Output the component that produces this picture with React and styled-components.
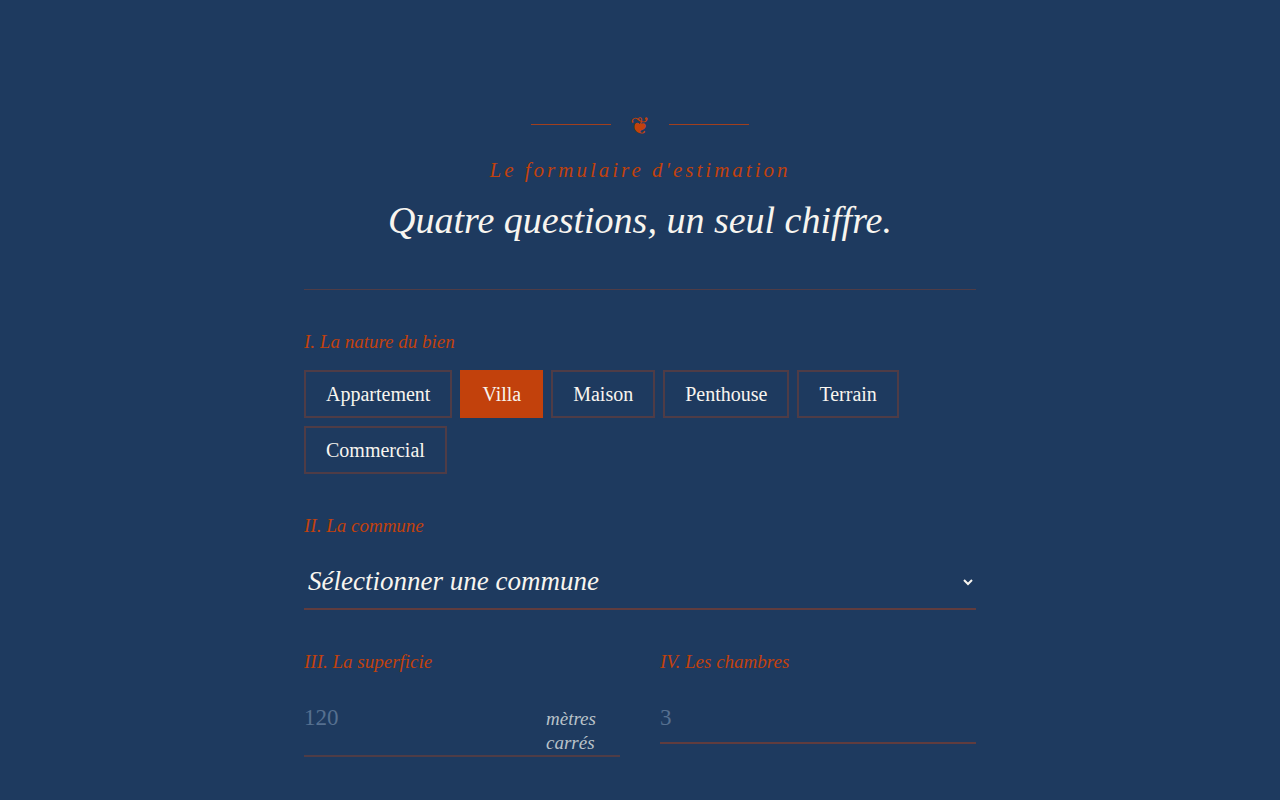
import React, { useState } from "react";
import styled, { createGlobalStyle } from "styled-components";

const natures = [
  "Appartement",
  "Villa",
  "Maison",
  "Penthouse",
  "Terrain",
  "Commercial",
];

function App() {
  const [nature, setNature] = useState("Villa");
  const [commune, setCommune] = useState("");

  return (
    <Page>
      <GlobalStyle />
      <Container>
        <Header>
          <Ornament aria-hidden="true">
            <Rule />
            <Fleuron>❦</Fleuron>
            <Rule />
          </Ornament>
          <Eyebrow>Le formulaire d'estimation</Eyebrow>
          <Title>Quatre questions, un seul chiffre.</Title>
        </Header>
        <Form>
          <Group>
            <Legend>I. La nature du bien</Legend>
            <Choices>
              {natures.map((name) => (
                <Choice
                  key={name}
                  type="button"
                  $active={name === nature}
                  aria-pressed={name === nature}
                  onClick={() => setNature(name)}
                >
                  {name}
                </Choice>
              ))}
            </Choices>
          </Group>
          <Field>
            <Label htmlFor="commune">II. La commune</Label>
            <Select
              id="commune"
              value={commune}
              onChange={(e) => setCommune(e.target.value)}
            >
              <option value="">Sélectionner une commune</option>
            </Select>
          </Field>
          <Columns>
            <Field>
              <Label htmlFor="superficie">III. La superficie</Label>
              <InputLine $faint>
                <Input id="superficie" inputMode="numeric" placeholder="120" />
                <Unit>mètres carrés</Unit>
              </InputLine>
            </Field>
            <Field>
              <Label htmlFor="chambres">IV. Les chambres</Label>
              <InputLine>
                <Input id="chambres" inputMode="numeric" placeholder="3" />
              </InputLine>
            </Field>
          </Columns>
        </Form>
      </Container>
    </Page>
  );
}

export default App;

const GlobalStyle = createGlobalStyle`
  * {
    box-sizing: border-box;
  }
  body {
    margin: 0;
    background: #1e3a5f;
    color: #f8f5ef;
    font-family: "Liberation Serif", serif;
  }
`;

const Page = styled.main`
  min-height: 100vh;
  padding: 112px 24px 0;
  overflow: hidden;
`;
const Container = styled.div`
  max-width: 672px;
  margin: 0 auto;
`;
const Header = styled.header`
  padding-bottom: 45px;
  border-bottom: 1px solid rgba(194, 65, 12, 0.3);
  text-align: center;
`;
const Ornament = styled.div`
  display: flex;
  justify-content: center;
  align-items: center;
  gap: 19px;
  height: 24px;
  margin-bottom: 20px;
`;
const Rule = styled.span`
  width: 80px;
  height: 1px;
  background: #c2410c;
  opacity: 0.8;
`;
const Fleuron = styled.span`
  padding-top: 4px;
  color: #c2410c;
  font-size: 24px;
  line-height: 24px;
`;
const Eyebrow = styled.p`
  margin: 0 0 12px;
  color: #c2410c;
  font-size: 21px;
  font-style: italic;
  line-height: 28px;
  letter-spacing: 3px;
`;
const Title = styled.h2`
  margin: 0;
  font-size: 38px;
  font-style: italic;
  font-weight: 400;
  line-height: 48px;
`;
const Form = styled.form`
  display: flex;
  flex-direction: column;
  gap: 40px;
  padding-top: 40px;
`;
const Group = styled.fieldset`
  min-width: 0;
  margin: 0;
  padding: 0;
  border: 0;
`;
const Legend = styled.legend`
  margin-bottom: 16px;
  padding: 0;
  color: #c2410c;
  font-size: 19px;
  font-style: italic;
  line-height: 24px;
`;
const Choices = styled.div`
  display: flex;
  flex-wrap: wrap;
  gap: 8px;
`;
const Choice = styled.button`
  height: 48px;
  padding: 0 20px;
  border: 2px solid
    ${(props) => (props.$active ? "#c2410c" : "rgba(194, 65, 12, 0.3)")};
  background: ${(props) => (props.$active ? "#c2410c" : "transparent")};
  color: #f8f5ef;
  font-family: inherit;
  font-size: 20px;
  cursor: pointer;
`;
const Field = styled.div`
  min-width: 0;
`;
const Label = styled.label`
  display: block;
  margin-bottom: 16px;
  color: #c2410c;
  font-size: 19px;
  font-style: italic;
  line-height: 24px;
`;
const Select = styled.select`
  display: block;
  width: 100%;
  height: 56px;
  padding: 0;
  border: 0;
  border-bottom: 2px solid rgba(194, 65, 12, 0.4);
  border-radius: 0;
  background: transparent;
  color: #f8f5ef;
  font-family: inherit;
  font-size: 27px;
  font-style: italic;
`;
const Columns = styled.div`
  display: grid;
  grid-template-columns: 1fr 1fr;
  align-items: start;
  gap: 40px;
`;
const InputLine = styled.div`
  display: flex;
  align-items: baseline;
  gap: 12px;
  border-bottom: 2px solid
    rgba(194, 65, 12, ${(props) => (props.$faint ? 0.3 : 0.4)});
`;
const Input = styled.input`
  flex: 1;
  min-width: 0;
  height: 52px;
  padding: 4px 0 0;
  border: 0;
  outline: none;
  background: transparent;
  color: #f8f5ef;
  font-family: inherit;
  font-size: 23px;
  &::placeholder {
    color: #567090;
    opacity: 1;
  }
`;
const Unit = styled.span`
  flex: 0 0 74px;
  color: #b9c2c9;
  font-size: 19px;
  font-style: italic;
  line-height: 24px;
`;
